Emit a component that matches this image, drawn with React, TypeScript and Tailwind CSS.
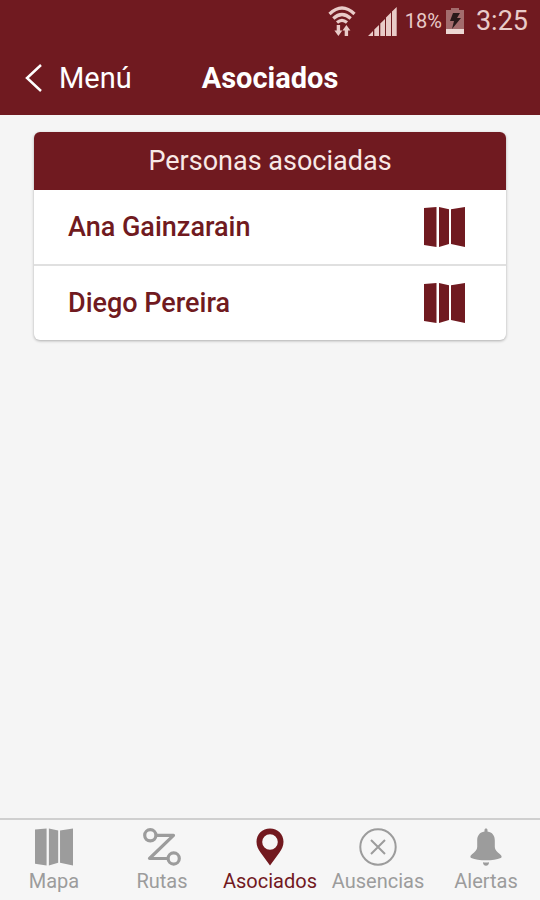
import type { ReactNode } from "react";

function MapIcon({ className }: { className: string }) {
  return (
    <svg viewBox="0 0 41 40" className={className} fill="currentColor" aria-hidden="true">
      <path d="M0 1 12.5 0V40L0 38Z" />
      <path d="M15 0 25 2.3V37L15 40Z" />
      <path d="M27 2.3 41 0V40L27 37Z" />
    </svg>
  );
}

function RouteIcon() {
  return (
    <svg viewBox="0 0 38 38" className="h-[38px] w-[38px]" fill="none" stroke="currentColor" strokeWidth="3.2" aria-hidden="true">
      <circle cx="7.3" cy="7.3" r="5.6" />
      <circle cx="30.7" cy="30.5" r="5.6" />
      <path d="M13 7.3H30.5L6.5 30.5H25" strokeLinejoin="round" />
    </svg>
  );
}

function PinIcon() {
  return (
    <svg viewBox="0 0 28 38" className="h-[38px] w-7" fill="currentColor" aria-hidden="true">
      <path
        fillRule="evenodd"
        d="M14 .5C6.3.5 .5 6.3.5 13.700c0 4.300 1.700 7.300 4 10.800L14 37.500l9.500-13c2.300-3.500 4-6.500 4-10.800C27.500 6.300 21.700.5 14 .5ZM14 6.200a7.800 7.800 0 1 1 0 15.600 7.800 7.800 0 0 1 0-15.600Z"
      />
    </svg>
  );
}

function AbsenceIcon() {
  return (
    <svg viewBox="0 0 38 38" className="h-[38px] w-[38px]" fill="none" stroke="currentColor" strokeWidth="2" aria-hidden="true">
      <circle cx="19" cy="19" r="17.7" />
      <path d="M12 12 26 26M26 12 12 26" />
    </svg>
  );
}

function BellIcon() {
  return (
    <svg viewBox="0 0 32 38" className="h-[38px] w-8" fill="currentColor" aria-hidden="true">
      <path d="M16 .5c1 0 1.500.7 1.500 1.700v1.300c4.800.7 7.300 4 7.300 9V19c0 3 2.200 4.500 5.200 7.300 1.800 1.700 2.200 2.900.7 3.700C27 31.700 22 32.300 16 32.300S5 31.700 1.300 30c-1.500-.8-1.100-2 .7-3.700 3-2.800 5.200-4.300 5.200-7.300v-6.500c0-5 2.500-8.300 7.300-9V2.200c0-1 .5-1.700 1.500-1.700Z" />
      <path d="M13 34.200c2 .4 4 .4 6 0 0 2.300-1.100 3.500-3 3.500S13 36.500 13 34.200Z" />
    </svg>
  );
}

function WifiIcon() {
  return (
    <svg viewBox="0 0 28 31" className="h-[31px] w-7" aria-hidden="true">
      <g fill="none" stroke="currentColor" strokeWidth="3.2">
        <path d="M1.500 8Q14-4 26.500 8" />
        <path d="M5.300 12.500Q14 4.500 22.700 12.500" />
        <path d="M9 16.500Q14 12.300 19 16.500" />
      </g>
      <path fill="currentColor" d="M8.700 19h3.400v5.500h2.200l-3.900 5.500-4-5.500h2.300ZM16.700 30h3.400v-5.500h2.300l-4-5.500-3.900 5.500h2.200Z" />
    </svg>
  );
}

function SignalIcon() {
  return (
    <svg viewBox="0 0 29 30" className="h-[30px] w-[29px]" fill="currentColor" aria-hidden="true">
      <path d="M0 30 5 25v5ZM6.300 23.500 11 19V30H6.300ZM12.300 17.500 17 13V30H12.300ZM18 11.500 23 6.500V30H18ZM24 5.500 28.700 1V30H24Z" />
    </svg>
  );
}

function BatteryIcon() {
  return (
    <svg viewBox="0 0 18 26" className="h-[26px] w-[18px]" aria-hidden="true">
      <path fill="#a36c6d" d="M5 0h8v2h5v24H0V2h5Z" />
      <path fill="#edd8d4" d="M0 21h18v5H0Z" />
      <path fill="#29191a" d="M7 5h7l-3 5h4L6 21l2-8H4Z" />
    </svg>
  );
}

function PersonRow({ name }: { name: string }) {
  return (
    <li className="flex items-center justify-between py-[17px] pr-[41px] pl-[34px]">
      <span className="text-[27px] leading-8 font-medium">{name}</span>
      <button type="button" aria-label={`Ver a ${name} en el mapa`}>
        <MapIcon className="h-10 w-[41px]" />
      </button>
    </li>
  );
}

function Tab({ label, active = false, children }: { label: string; active?: boolean; children: ReactNode }) {
  return (
    <button
      type="button"
      aria-current={active ? "page" : undefined}
      className={`flex min-w-0 flex-1 flex-col items-center pt-2 ${active ? "text-[#72191f]" : "text-[#9c9c9c]"}`}
    >
      {children}
      <span className="mt-[3px] text-[20px] leading-6">{label}</span>
    </button>
  );
}

export default function App() {
  return (
    <div className="flex min-h-screen flex-col bg-[#f5f5f5] font-[Roboto,sans-serif]">
      <header className="bg-[#701a20] text-white">
        <div className="flex h-10 items-center justify-end pt-[2px] pr-3 text-[#e9cbc8]">
          <WifiIcon />
          <span className="ml-3"><SignalIcon /></span>
          <span className="ml-2 text-[20px]">18%</span>
          <span className="ml-1"><BatteryIcon /></span>
          <time className="ml-3 text-[27px] leading-8">3:25</time>
        </div>
        <div className="grid h-[75px] grid-cols-[1fr_auto_1fr] items-center px-6">
          <button type="button" className="flex items-center gap-4 justify-self-start text-[29px] leading-9">
            <svg viewBox="0 0 19 28" className="h-7 w-[19px]" fill="none" stroke="currentColor" strokeWidth="2.5" aria-hidden="true">
              <path d="M17 1 3 14 17 27" />
            </svg>
            Menú
          </button>
          <h1 className="text-[29px] leading-9 font-bold">Asociados</h1>
        </div>
      </header>
      <main className="flex-1 px-[34px] pt-[17px]">
        <section className="overflow-hidden rounded-md bg-white text-[#701a20] shadow-[0_1px_3px_rgba(0,0,0,0.3)]">
          <h2 className="bg-[#701a20] py-[11px] text-center text-[27px] leading-9 text-[#f8e9e6]">Personas asociadas</h2>
          <ul className="divide-y-2 divide-[#e0e0e0]">
            <PersonRow name="Ana Gainzarain" />
            <PersonRow name="Diego Pereira" />
          </ul>
        </section>
      </main>
      <nav className="flex h-[82px] border-t-2 border-[#cfcfcf] bg-[#f6f6f6]">
        <Tab label="Mapa"><MapIcon className="h-[38px] w-[38px]" /></Tab>
        <Tab label="Rutas"><RouteIcon /></Tab>
        <Tab label="Asociados" active><PinIcon /></Tab>
        <Tab label="Ausencias"><AbsenceIcon /></Tab>
        <Tab label="Alertas"><BellIcon /></Tab>
      </nav>
    </div>
  );
}
